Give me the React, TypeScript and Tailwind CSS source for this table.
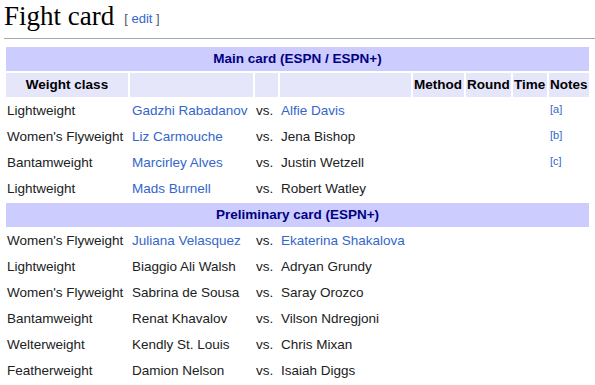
const link = "text-[#3366cc]";

type Fight = {
  weight: string;
  a: string;
  aLink?: boolean;
  b: string;
  bLink?: boolean;
  note?: string;
};

const mainCard: Fight[] = [
  { weight: "Lightweight", a: "Gadzhi Rabadanov", aLink: true, b: "Alfie Davis", bLink: true, note: "a" },
  { weight: "Women's Flyweight", a: "Liz Carmouche", aLink: true, b: "Jena Bishop", note: "b" },
  { weight: "Bantamweight", a: "Marcirley Alves", aLink: true, b: "Justin Wetzell", note: "c" },
  { weight: "Lightweight", a: "Mads Burnell", aLink: true, b: "Robert Watley" },
];

const prelims: Fight[] = [
  { weight: "Women's Flyweight", a: "Juliana Velasquez", aLink: true, b: "Ekaterina Shakalova", bLink: true },
  { weight: "Lightweight", a: "Biaggio Ali Walsh", b: "Adryan Grundy" },
  { weight: "Women's Flyweight", a: "Sabrina de Sousa", b: "Saray Orozco" },
  { weight: "Bantamweight", a: "Renat Khavalov", b: "Vilson Ndregjoni" },
  { weight: "Welterweight", a: "Kendly St. Louis", b: "Chris Mixan" },
  { weight: "Featherweight", a: "Damion Nelson", b: "Isaiah Diggs" },
];

const Row = ({ f }: { f: Fight }) => (
  <tr>
    <td className="h-6 px-px">{f.weight}</td>
    <td className={`h-6 px-[2px] ${f.aLink ? link : ""}`}>{f.a}</td>
    <td className="h-6 px-px">vs.</td>
    <td className={`h-6 px-px ${f.bLink ? link : ""}`}>{f.b}</td>
    <td className="h-6"></td>
    <td className="h-6"></td>
    <td className="h-6"></td>
    <td className="h-6 px-px align-top">
      {f.note && (
        <span className={`${link} block text-[11px] leading-[12px] pt-[4px]`}>[{f.note}]</span>
      )}
    </td>
  </tr>
);

const SectionHead = ({ title }: { title: string }) => (
  <tr>
    <th colSpan={8} className="h-6 bg-[#ccccff] text-[#000080] font-bold text-center">
      {title}
    </th>
  </tr>
);

export default function App() {
  return (
    <div className="w-[595px] h-[385px] bg-white overflow-hidden font-['Liberation_Sans',Arial,sans-serif] text-[13.5px] text-[#202122]">
      <div className="ml-1 h-[39px] border-b border-[#a2a9b1] flex items-start">
        <h2 className="font-['Liberation_Serif','Times_New_Roman',serif] text-[27px] leading-[32px] text-black">
          Fight card
        </h2>
        <span className="ml-[10px] mt-[10px] text-[13px] leading-[18px] text-[#54595d]">
          [ <span className={link}>edit</span> ]
        </span>
      </div>
      <table className="ml-1 mt-[6px] w-[587px] border-separate border-spacing-[2px] table-fixed leading-[22px] whitespace-nowrap">
        <colgroup>
          <col className="w-[122px]" />
          <col className="w-[123px]" />
          <col className="w-[23px]" />
          <col className="w-[131px]" />
          <col className="w-[51px]" />
          <col className="w-[45px]" />
          <col className="w-[34px]" />
          <col className="w-[40px]" />
        </colgroup>
        <tbody>
          <SectionHead title="Main card (ESPN / ESPN+)" />
          <tr className="bg-[#e6e6fa] font-bold text-black">
            <th className="h-6 text-center">Weight class</th>
            <th></th>
            <th></th>
            <th></th>
            <th className="text-left px-px">Method</th>
            <th className="text-left px-px">Round</th>
            <th className="text-left px-px">Time</th>
            <th className="text-left px-px">Notes</th>
          </tr>
          {mainCard.map((f, i) => (
            <Row key={i} f={f} />
          ))}
          <SectionHead title="Preliminary card (ESPN+)" />
          {prelims.map((f, i) => (
            <Row key={i} f={f} />
          ))}
        </tbody>
      </table>
    </div>
  );
}
